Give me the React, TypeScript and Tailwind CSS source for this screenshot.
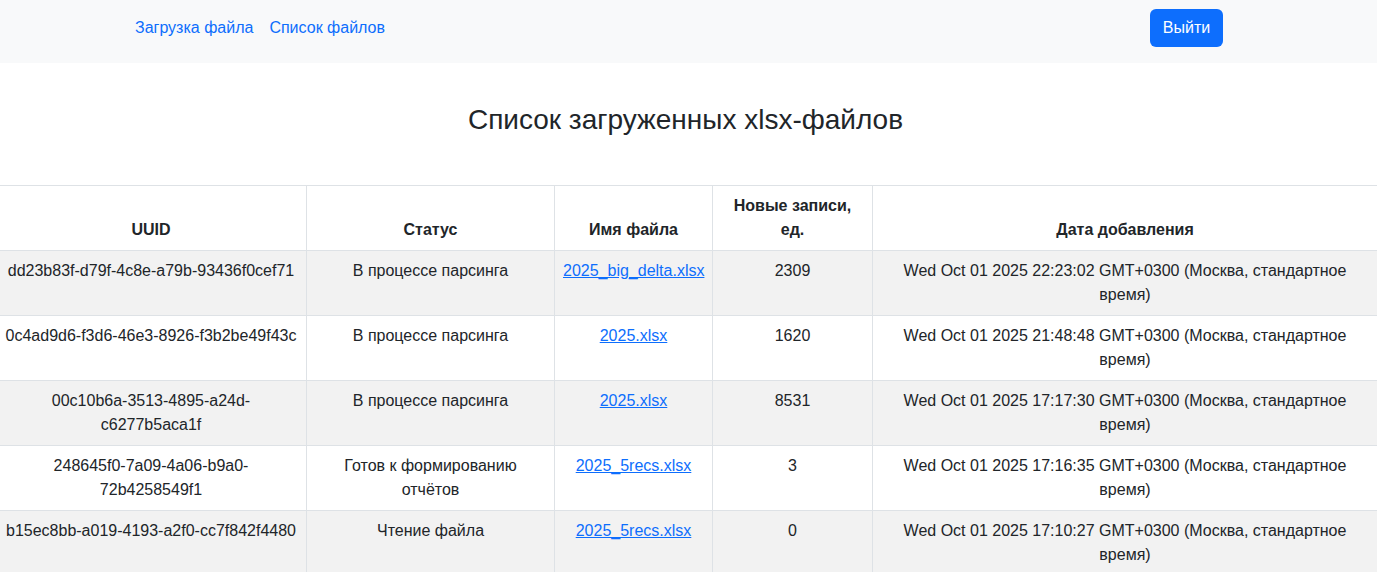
const rows = [
  { uuid: "dd23b83f-d79f-4c8e-a79b-93436f0cef71", status: "В процессе парсинга", file: "2025_big_delta.xlsx", count: "2309", date: "Wed Oct 01 2025 22:23:02 GMT+0300 (Москва, стандартное время)" },
  { uuid: "0c4ad9d6-f3d6-46e3-8926-f3b2be49f43c", status: "В процессе парсинга", file: "2025.xlsx", count: "1620", date: "Wed Oct 01 2025 21:48:48 GMT+0300 (Москва, стандартное время)" },
  { uuid: "00c10b6a-3513-4895-a24d-c6277b5aca1f", status: "В процессе парсинга", file: "2025.xlsx", count: "8531", date: "Wed Oct 01 2025 17:17:30 GMT+0300 (Москва, стандартное время)" },
  { uuid: "248645f0-7a09-4a06-b9a0-72b4258549f1", status: "Готов к формированию отчётов", file: "2025_5recs.xlsx", count: "3", date: "Wed Oct 01 2025 17:16:35 GMT+0300 (Москва, стандартное время)" },
  { uuid: "b15ec8bb-a019-4193-a2f0-cc7f842f4480", status: "Чтение файла", file: "2025_5recs.xlsx", count: "0", date: "Wed Oct 01 2025 17:10:27 GMT+0300 (Москва, стандартное время)" },
];

export default function App() {
  return (
    <div className="min-h-screen overflow-hidden bg-white text-[16px] leading-6 text-[#212529] font-['Liberation_Sans',Arial,sans-serif]">
      {/* navbar */}
      <nav className="h-[63px] bg-[#f8f9fa] pt-[9px]">
        <div className="flex items-center pl-[127px] pr-[154px]">
          <a href="#" className="px-2 py-[7px] text-[#0d6efd]">Загрузка файла</a>
          <a href="#" className="px-2 py-[7px] text-[#0d6efd]">Список файлов</a>
          <button className="ml-auto h-[38px] w-[73px] rounded-md bg-[#0d6efd] text-white">Выйти</button>
        </div>
      </nav>

      <h3 className="pt-10 pb-12 pr-[6px] text-center text-[28px] leading-[1.2] font-normal">Список загруженных xlsx-файлов</h3>

      <table className="w-[1382px] -ml-[5px] table-fixed border-collapse">
        <colgroup>
          <col className="w-[311px]" />
          <col className="w-[248px]" />
          <col className="w-[158px]" />
          <col className="w-[160px]" />
          <col className="w-[505px]" />
        </colgroup>
        <thead>
          <tr>
            {["UUID", "Статус", "Имя файла", "Новые записи, ед.", "Дата добавления"].map((h) => (
              <th key={h} className="border border-[#dee2e6] p-2 text-center align-bottom font-bold">{h}</th>
            ))}
          </tr>
        </thead>
        <tbody>
          {rows.map((r, i) => (
            <tr key={r.uuid} className={i % 2 === 0 ? "bg-[#f2f2f2]" : "bg-white"}>
              <td className="border border-[#dee2e6] p-2 text-center align-top">{r.uuid}</td>
              <td className="border border-[#dee2e6] p-2 text-center align-top">{r.status}</td>
              <td className="border border-[#dee2e6] p-2 text-center align-top">
                <a href="#" className="text-[#0d6efd] underline">{r.file}</a>
              </td>
              <td className="border border-[#dee2e6] p-2 text-center align-top">{r.count}</td>
              <td className="border border-[#dee2e6] p-2 text-center align-top">{r.date}</td>
            </tr>
          ))}
        </tbody>
      </table>
    </div>
  );
}
